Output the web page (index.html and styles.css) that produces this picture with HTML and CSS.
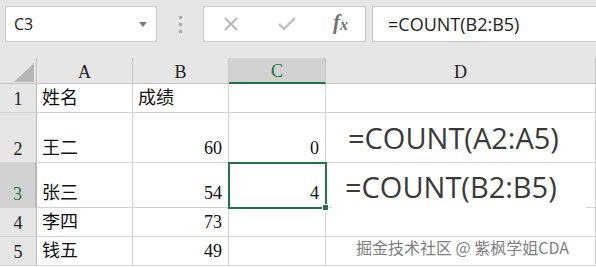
FILE: index.html
```html
<!DOCTYPE html>
<html lang="zh-CN">
<head>
  <meta charset="UTF-8" />
  <title>COUNT</title>
  <link rel="stylesheet" href="styles.css">
</head>
<body>
  <div class="toolbar">
    <div class="name-box">
      <span>C3</span>
      <span class="caret"></span>
    </div>
    <div class="grip"><i></i><i></i><i></i></div>
    <div class="fx-box">
      <svg class="icon" width="18" height="18" viewBox="0 0 18 18">
        <path d="M3 3 L15 15 M15 3 L3 15" stroke="#b8b8b8" stroke-width="2" fill="none"/>
      </svg>
      <svg class="icon" width="20" height="18" viewBox="0 0 20 18">
        <path d="M2 9 L7 14 L18 3" stroke="#c4c4c4" stroke-width="2.6" fill="none"/>
      </svg>
      <span class="fx">f<sub>x</sub></span>
    </div>
    <div class="formula-input">=COUNT(B2:B5)</div>
  </div>

  <div class="sheet">
    <div class="grid">
      <div class="hd corner"><span class="tri"></span></div>
      <div class="hd col">A</div>
      <div class="hd col">B</div>
      <div class="hd col active-col">C</div>
      <div class="hd col">D</div>

      <div class="hd row">1</div>
      <div class="cell">姓名</div>
      <div class="cell">成绩</div>
      <div class="cell"></div>
      <div class="cell"></div>

      <div class="hd row">2</div>
      <div class="cell">王二</div>
      <div class="cell num">60</div>
      <div class="cell num">0</div>
      <div class="cell"></div>

      <div class="hd row active-row">3</div>
      <div class="cell">张三</div>
      <div class="cell num">54</div>
      <div class="cell num selected">4<span class="handle"></span></div>
      <div class="cell"></div>

      <div class="hd row">4</div>
      <div class="cell">李四</div>
      <div class="cell num">73</div>
      <div class="cell"></div>
      <div class="cell"></div>

      <div class="hd row">5</div>
      <div class="cell">钱五</div>
      <div class="cell num">49</div>
      <div class="cell"></div>
      <div class="cell"></div>
    </div>

    <!-- pasted formula pictures floating over column D -->
    <div class="note note-a">=COUNT(A2:A5)</div>
    <div class="note note-b">=COUNT(B2:B5)</div>
    <div class="watermark">掘金技术社区 @ 紫枫学姐CDA</div>
  </div>
</body>
</html>
```

FILE: styles.css
```css
* {
  box-sizing: border-box;
}

body {
  margin: 0;
  width: 596px;
  height: 267px;
  overflow: hidden;
  background: #fff;
  font-family: 'Liberation Serif', 'Noto Sans CJK SC', serif;
}

.toolbar {
  height: 58px;
  background: #e6e6e6;
  display: flex;
  align-items: center;
  padding: 0 0 10px 5px;
}

.name-box {
  width: 152px;
  height: 36px;
  background: #fff;
  border: 1px solid #c8c8c8;
  display: flex;
  align-items: center;
  justify-content: space-between;
  padding: 0 9px 0 8px;
  font-family: 'Open Sans', sans-serif;
  font-size: 16px;
  color: #222;
}

.caret {
  width: 0;
  height: 0;
  border-left: 4px solid transparent;
  border-right: 4px solid transparent;
  border-top: 5px solid #7a7a7a;
}

.grip {
  width: 46px;
  display: flex;
  flex-direction: column;
  align-items: center;
  gap: 4px;
}

.grip i {
  width: 3px;
  height: 3px;
  background: #a8a8a8;
}

.fx-box {
  width: 163px;
  height: 36px;
  background: #fff;
  border: 1px solid #c8c8c8;
  display: flex;
  align-items: center;
  padding: 0 17px 0 18px;
  justify-content: space-between;
}

.fx {
  font-family: 'Liberation Serif', serif;
  font-style: italic;
  font-weight: bold;
  font-size: 21px;
  color: #707070;
  margin-top: -4px;
}

.fx sub {
  font-size: 16px;
  vertical-align: -1px;
}

.formula-input {
  margin-left: 6px;
  flex: 1;
  height: 36px;
  background: #fff;
  border: 1px solid #c8c8c8;
  border-right: none;
  display: flex;
  align-items: center;
  padding-left: 15px;
  font-family: 'Open Sans', sans-serif;
  font-size: 18px;
  color: #222;
}

.sheet {
  position: relative;
}

.grid {
  display: grid;
  grid-template-columns: 37px 96px 96px 97px 1fr;
  grid-template-rows: 26px 29px 50px 45px 29px 29px;
}

.hd {
  background: #e6e6e6;
  border-right: 1px solid #c4c4c4;
  border-bottom: 1px solid #c4c4c4;
  color: #222;
  display: flex;
  align-items: center;
  justify-content: center;
  font-size: 18px;
}

.hd.col {
  padding-top: 3px;
}

.hd.row {
  align-items: flex-end;
  padding-bottom: 2px;
  border-right-color: #b8b8b8;
  border-bottom-color: #d2d2d2;
}

.corner {
  position: relative;
}

.tri {
  position: absolute;
  left: 14px;
  top: 5px;
  width: 0;
  height: 0;
  border-left: 20px solid transparent;
  border-bottom: 19px solid #b6b6b6;
}

.active-col {
  background: #d2d2d2;
  color: #217346;
  border-bottom: 2px solid #217346;
}

.active-row {
  background: #d2d2d2;
  color: #217346;
  border-right: 2px solid #217346;
}

.cell {
  border-right: 1px solid #d4d4d4;
  border-bottom: 1px solid #d4d4d4;
  display: flex;
  align-items: flex-end;
  padding: 0 4px 2px 5px;
  font-size: 18px;
  color: #111;
  line-height: 24px;
}

.num {
  justify-content: flex-end;
  padding-right: 6px;
}

.selected {
  position: relative;
  outline: 2px solid #217346;
  outline-offset: -1px;
}

.handle {
  position: absolute;
  right: -4px;
  bottom: -4px;
  width: 7px;
  height: 7px;
  background: #217346;
  border: 1px solid #fff;
}

.note {
  position: absolute;
  font-family: 'Open Sans', sans-serif;
  font-size: 29px;
  color: #3a3a3a;
  line-height: 36px;
}

.note-a {
  left: 348px;
  top: 62px;
}

.note-b {
  left: 332px;
  top: 107px;
  width: 254px;
  height: 44px;
  background: #fff;
  padding: 4px 0 0 13px;
}

.watermark {
  position: absolute;
  left: 356px;
  top: 177px;
  font-family: 'Noto Sans CJK SC', sans-serif;
  font-size: 16px;
  color: #7e7e7e;
}
```
